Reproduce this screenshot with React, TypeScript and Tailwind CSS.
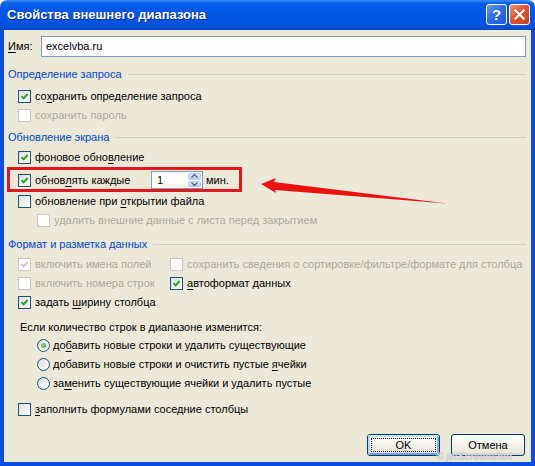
import React from "react";
import clsx from "clsx";

const font = "font-['Liberation_Sans',Arial,sans-serif]";

function Check({ checked, disabled }: { checked?: boolean; disabled?: boolean }) {
  return (
    <span
      className={clsx(
        "relative block w-[13px] h-[13px] shrink-0 border",
        disabled
          ? "border-[#cac8bb] bg-white"
          : "border-[#1c5180] bg-[linear-gradient(135deg,#dcdcd7_0%,#f4f4f0_60%,#ffffff_100%)]"
      )}
    >
      {checked && (
        <svg viewBox="0 0 11 11" className="absolute inset-0 w-[11px] h-[11px]">
          <path
            d="M2.5 5.2 L4.6 7.4 L8.6 3"
            fill="none"
            stroke={disabled ? "#cac8bb" : "#21a121"}
            strokeWidth="1.9"
          />
        </svg>
      )}
    </span>
  );
}

function Radio({ checked }: { checked?: boolean }) {
  return (
    <span className="relative flex items-center justify-center w-[13px] h-[13px] shrink-0 rounded-full border border-[#1c5180] bg-[linear-gradient(135deg,#dcdcd7_0%,#ffffff_100%)]">
      {checked && (
        <span className="block w-[5px] h-[5px] rounded-full bg-[radial-gradient(circle_at_35%_35%,#7ce47a,#21a121)]" />
      )}
    </span>
  );
}

// label text with one underlined access key
function Lbl({ pre = "", k = "", post = "" }: { pre?: string; k?: string; post?: string }) {
  return (
    <span className="whitespace-nowrap">
      {pre}
      {k && <u className="underline-offset-[2px]">{k}</u>}
      {post}
    </span>
  );
}

function Row({
  checked,
  disabled,
  indent = "pl-[10px]",
  children,
}: {
  checked?: boolean;
  disabled?: boolean;
  indent?: string;
  children: React.ReactNode;
}) {
  return (
    <div className={clsx("flex items-center gap-[4px] h-[19px]", indent, disabled ? "text-[#aca899]" : "text-black")}>
      <Check checked={checked} disabled={disabled} />
      {children}
    </div>
  );
}

function Group({ title, className }: { title: string; className: string }) {
  return (
    <div className={clsx("flex items-center gap-[6px] h-[16px]", className)}>
      <span className="text-[#0046d5] whitespace-nowrap">{title}</span>
      <span className="flex-1 h-px bg-[#d0d0bf]" />
    </div>
  );
}

function RadioRow({ checked, children }: { checked?: boolean; children: React.ReactNode }) {
  return (
    <div className="flex items-center gap-[3px] h-[19px] pl-[29px]">
      <Radio checked={checked} />
      {children}
    </div>
  );
}

function XpButton({ children, focused, className }: { children: React.ReactNode; focused?: boolean; className: string }) {
  return (
    <button
      className={clsx(
        "relative h-[22px] rounded-[3px] border border-[#003c74] bg-[linear-gradient(to_bottom,#ffffff_0%,#f5f4ef_45%,#ebe8dc_85%,#d6d0c5_100%)] text-black",
        className
      )}
    >
      {focused && (
        <>
          <span className="absolute inset-0 rounded-[2px] border-[2px] border-t-[#cee7ff] border-l-[#bcd4f6] border-r-[#89ade4] border-b-[#69a2ea]" />
          <span className="absolute inset-[3px] border border-dotted border-black" />
        </>
      )}
      <span className="relative">{children}</span>
    </button>
  );
}

export default function App() {
  return (
    <div className={clsx("relative w-[535px] h-[466px] flex flex-col text-[11px] bg-white", font)}>
      {/* title bar */}
      <div className="h-[30px] shrink-0 flex items-center justify-between pl-[7px] pr-[5px] rounded-t-[7px] bg-[linear-gradient(to_bottom,#3b8ef5_0%,#0a62ec_10%,#0058e8_30%,#0054e3_60%,#0052dd_88%,#0044c4_100%)]">
        <span className="text-white font-bold text-[13px] [text-shadow:1px_1px_0_#0a2a8c]">
          Свойства внешнего диапазона
        </span>
        <div className="flex items-center gap-[2px] pb-[1px]">
          <div className="w-[21px] h-[21px] rounded-[3px] border border-white flex items-center justify-center bg-[linear-gradient(135deg,#6a9cf5_0%,#2f6ee9_45%,#1c58d8_100%)] text-white font-bold text-[15px] leading-none font-['Liberation_Sans',sans-serif]">
            ?
          </div>
          <div className="w-[21px] h-[21px] rounded-[3px] border border-white flex items-center justify-center bg-[linear-gradient(135deg,#f29a76_0%,#e0542f_45%,#c8401c_100%)]">
            <svg viewBox="0 0 13 13" className="w-[13px] h-[13px]">
              <path d="M2.5 2.5 L10.5 10.5 M10.5 2.5 L2.5 10.5" stroke="white" strokeWidth="2.2" strokeLinecap="square" />
            </svg>
          </div>
        </div>
      </div>

      {/* body */}
      <div className="flex-1 flex flex-col border-x-[4px] border-b-[4px] border-[#0a4ee0] bg-[#ece9d8] pl-[4px] pr-[5px] pt-[6px] pb-[6px]">
        <div className="flex items-center h-[21px]">
          <span className="w-[33px]">
            <Lbl k="И" post="мя:" />
          </span>
          <div className="flex-1 h-[21px] border border-[#7f9db9] bg-white flex items-center pl-[4px]">
            excelvba.ru
          </div>
        </div>

        <Group title="Определение запроса" className="mt-[9px]" />
        <div className="mt-[5px]">
          <Row checked>
            <Lbl pre="со" k="х" post="ранить определение запроса" />
          </Row>
          <Row disabled>
            <Lbl pre="сохранить пароль" />
          </Row>
        </div>

        <Group title="Обновление экрана" className="mt-[4px]" />
        <div className="mt-[3px]">
          <Row checked>
            <Lbl pre="фоновое обно" k="в" post="ление" />
          </Row>
          <div className="relative mt-[1px] h-[24px] flex items-center gap-[4px] pl-[10px]">
            <Check checked />
            <span className="w-[112px]">
              <Lbl pre="обнов" k="л" post="ять каждые" />
            </span>
            <div className="w-[52px] h-[18px] border border-[#7f9db9] bg-white flex">
              <span className="flex-1 pl-[5px] leading-[16px]">1</span>
              <div className="w-[15px] flex flex-col gap-[1px] p-[1px]">
                <span className="flex-1 rounded-[2px] bg-[linear-gradient(to_bottom,#e3ebfd,#b9cdf9)] border border-[#b4c8f6] flex items-center justify-center">
                  <svg viewBox="0 0 7 4" className="w-[7px] h-[4px]">
                    <path d="M0.5 3.5 L3.5 0.5 L6.5 3.5" fill="none" stroke="#4d6185" strokeWidth="1.4" />
                  </svg>
                </span>
                <span className="flex-1 rounded-[2px] bg-[linear-gradient(to_bottom,#e3ebfd,#b9cdf9)] border border-[#b4c8f6] flex items-center justify-center">
                  <svg viewBox="0 0 7 4" className="w-[7px] h-[4px]">
                    <path d="M0.5 0.5 L3.5 3.5 L6.5 0.5" fill="none" stroke="#4d6185" strokeWidth="1.4" />
                  </svg>
                </span>
              </div>
            </div>
            <span className="ml-[-1px]">мин.</span>
            {/* red annotation frame */}
            <span className="absolute left-[-1px] top-[-1px] w-[235px] h-[25px] border-[3px] border-[#e2161c]" />
          </div>
          <Row>
            <Lbl pre="обновление при " k="о" post="ткрытии файла" />
          </Row>
          <Row disabled indent="pl-[29px]">
            <Lbl pre="удалить внешние данные с листа перед закрытием" />
          </Row>
        </div>

        <Group title="Формат и разметка данных" className="mt-[6px]" />
        <div className="mt-[3px] grid grid-cols-[162px_1fr]">
          <Row checked disabled>
            <Lbl pre="включить имена полей" />
          </Row>
          <Row disabled indent="pl-0">
            <Lbl pre="сохранить сведения о сортировке/фильтре/формате для столбца" />
          </Row>
          <Row disabled>
            <Lbl pre="включить номера строк" />
          </Row>
          <Row checked indent="pl-0">
            <Lbl k="а" post="втоформат данных" />
          </Row>
          <Row checked>
            <Lbl pre="задать " k="ш" post="ирину столбца" />
          </Row>
        </div>

        <div className="mt-[6px] h-[18px] flex items-center pl-[12px]">
          Если количество строк в диапазоне изменится:
        </div>
        <RadioRow checked>
          <Lbl pre="до" k="б" post="авить новые строки и удалить существующие" />
        </RadioRow>
        <RadioRow>
          <Lbl pre="добавить новые строки и очистить пустые " k="я" post="чейки" />
        </RadioRow>
        <RadioRow>
          <Lbl pre="за" k="м" post="енить существующие ячейки и удалить пустые" />
        </RadioRow>

        <div className="mt-[7px]">
          <Row>
            <Lbl k="з" post="аполнить формулами соседние столбцы" />
          </Row>
        </div>

        <div className="mt-auto flex justify-end gap-[11px] pr-[1px]">
          <XpButton focused className="w-[73px]">
            OK
          </XpButton>
          <XpButton className="w-[74px]">Отмена</XpButton>
        </div>
      </div>

      {/* red arrow annotation */}
      <svg className="absolute left-[255px] top-[170px] w-[200px] h-[40px]" viewBox="0 0 200 40">
        <polygon points="6,14 21,8 19,12 192,33.5 20,20 21,23" fill="#f01010" />
      </svg>

      {/* faint watermark */}
      <span className="absolute left-[436px] top-[452px] text-[10px] leading-[10px] italic font-bold text-white/50 [text-shadow:0_0_1px_#9aa0b0]">
        © jetScreenshot
      </span>
    </div>
  );
}
